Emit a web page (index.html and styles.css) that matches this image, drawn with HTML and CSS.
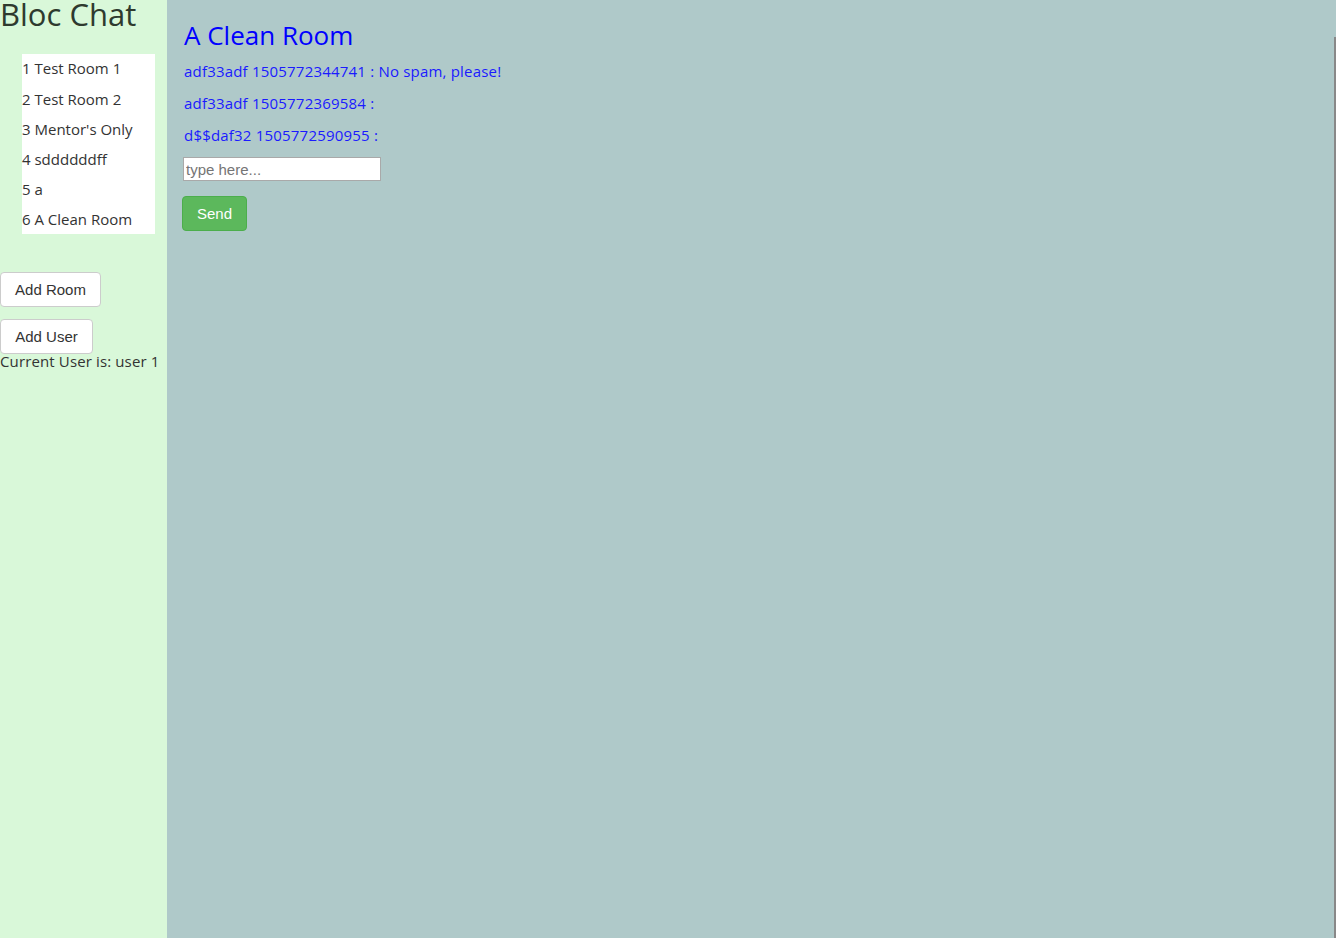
FILE: index.html
```html
<!DOCTYPE html>
<html>
<head>
<meta charset="utf-8">
<title>Bloc Chat</title>
<link rel="stylesheet" href="styles.css">
</head>
<body>
<div class="app">
  <aside class="sidebar">
    <h1 class="brand">Bloc Chat</h1>
    <ul class="rooms">
      <li>1 Test Room 1</li>
      <li>2 Test Room 2</li>
      <li>3 Mentor's Only</li>
      <li>4 sddddddff</li>
      <li>5 a</li>
      <li>6 A Clean Room</li>
    </ul>
    <button class="btn btn-default add-room">Add Room</button>
    <button class="btn btn-default add-user">Add User</button>
    <div class="current-user">Current User is: user 1</div>
  </aside>
  <main class="main">
    <h2 class="room-title">A Clean Room</h2>
    <div class="messages">
      <p class="msg">adf33adf 1505772344741 : No spam, please!</p>
      <p class="msg">adf33adf 1505772369584 :</p>
      <p class="msg">d$$daf32 1505772590955 :</p>
    </div>
    <input class="msg-input" type="text" placeholder="type here...">
    <button class="btn btn-send">Send</button>
  </main>
  <div class="scrollbar"></div>
</div>
</body>
</html>
```
FILE: styles.css
```css
html, body {
  margin: 0;
  padding: 0;
  height: 100%;
}
body {
  font-family: "Open Sans", sans-serif;
  font-size: 15px;
  color: #333;
  overflow: hidden;
}
.app {
  display: flex;
  height: 938px;
  position: relative;
}
.sidebar {
  width: 167px;
  flex: 0 0 167px;
  background: #d9f8d9;
  display: flex;
  flex-direction: column;
  align-items: flex-start;
}
.brand {
  margin: 0;
  font-weight: 400;
  font-size: 31px;
  line-height: 29px;
  padding-top: 0;
  color: #2e3a2e;
  white-space: nowrap;
}
.rooms {
  list-style: none;
  margin: 25px 0 0 22px;
  padding: 0;
  width: 133px;
  background: #fff;
}
.rooms li {
  line-height: 30px;
  height: 30px;
  white-space: nowrap;
}
.rooms li:first-child {
  line-height: 29px;
}
.btn {
  font-family: "Liberation Sans", Arial, sans-serif;
  font-size: 15px;
  line-height: 20px;
  border-radius: 4px;
  cursor: pointer;
  box-sizing: border-box;
}
.btn-default {
  background: #fff;
  border: 1px solid #ccc;
  color: #333;
  height: 35px;
  padding: 6px 13px;
}
.add-room {
  margin-top: 38px;
  width: 101px;
}
.add-user {
  margin-top: 12px;
  width: 93px;
}
.current-user {
  line-height: 14px;
  letter-spacing: 0.13px;
  white-space: nowrap;
}
.main {
  flex: 1;
  background: #afc9c9;
  padding: 0 0 0 15px;
  display: flex;
  flex-direction: column;
  align-items: flex-start;
}
.room-title {
  margin: 19px 0 0 2px;
  font-weight: 400;
  font-size: 26px;
  line-height: 32px;
  color: #0000ff;
  white-space: nowrap;
}
.messages {
  margin: 4px 0 0 2px;
}
.msg {
  margin: 0;
  height: 32px;
  line-height: 32px;
  color: #1a1aff;
  letter-spacing: 0.2px;
  white-space: nowrap;
}
.msg-input {
  margin: 6px 0 0 1px;
  width: 198px;
  height: 24px;
  box-sizing: border-box;
  border: 1px solid #a9a9a9;
  font-family: "Liberation Sans", Arial, sans-serif;
  font-size: 15px;
  padding: 1px 2px;
  background: #fff;
}
.msg-input::placeholder {
  color: #757575;
}
.btn-send {
  margin-top: 15px;
  width: 65px;
  height: 35px;
  background: #5cb85c;
  border: 1px solid #4cae4c;
  color: #fff;
  padding: 6px 12px;
}
.scrollbar {
  position: absolute;
  right: 0;
  top: 37px;
  width: 2px;
  height: 901px;
  background: #888;
}
```
